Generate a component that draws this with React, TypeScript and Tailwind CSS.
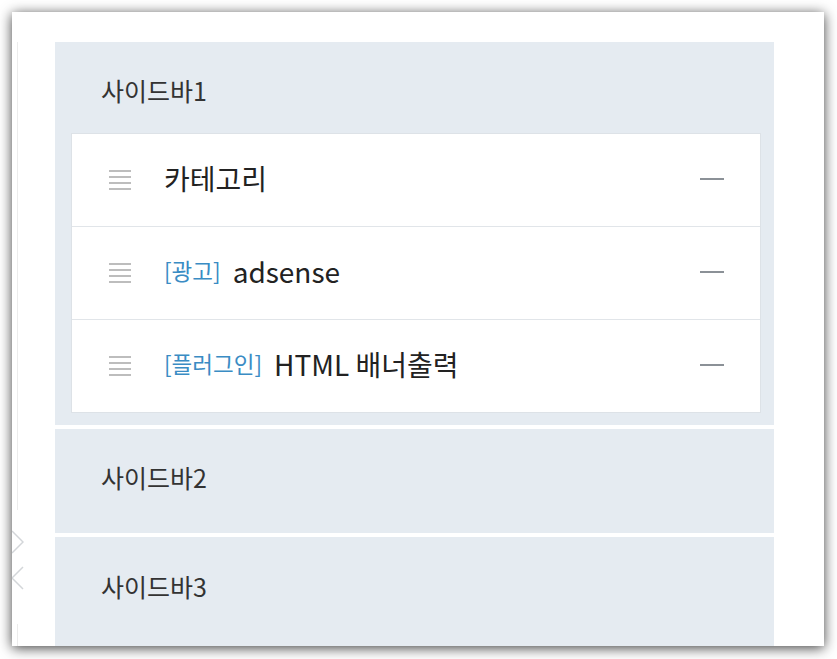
const font = { fontFamily: '"Noto Sans CJK KR", "Noto Sans", sans-serif' }

function Handle() {
  return (
    <div className="flex w-[22px] flex-col gap-[4px]">
      <span className="h-[2px] bg-[#bdbdbd]" />
      <span className="h-[2px] bg-[#bdbdbd]" />
      <span className="h-[2px] bg-[#bdbdbd]" />
      <span className="h-[2px] bg-[#bdbdbd]" />
    </div>
  )
}

function Row({ tag, title, last }: { tag?: string; title: string; last?: boolean }) {
  return (
    <div className={`flex items-center pl-[37px] pr-[36px] ${last ? "h-[92px]" : "h-[93px] border-b border-[#e1e5e9]"}`}>
      <Handle />
      <div className="ml-[33px] flex flex-1 items-center pb-[4px]">
        {tag && <span className="mr-[12px] text-[22.5px] text-[#3a8cc4]">{tag}</span>}
        <span className="text-[28px] leading-[32px] text-[#222]">{title}</span>
      </div>
      <span className="mb-[2px] h-[2px] w-[24px] bg-[#8b9197]" />
    </div>
  )
}

function Chevron({ dir }: { dir: "left" | "right" }) {
  return (
    <svg width="12" height="24" viewBox="0 0 12 24" fill="none" stroke="#d3d6d9" strokeWidth="1.5">
      {dir === "right" ? <path d="M0 1 L11 12 L0 23" /> : <path d="M11 1 L0 12 L11 23" />}
    </svg>
  )
}

export default function App() {
  return (
    <div className="h-[659px] w-[837px] bg-white p-[12px] pr-[13px]" style={font}>
      <div className="flex h-[634px] overflow-hidden bg-white pt-[30px] shadow-[0_2px_12px_rgba(0,0,0,0.75)]">
        {/* left rail */}
        <div className="flex w-[43px] flex-col">
          <div className="ml-[5px] h-[468px] w-px bg-[#ececec]" />
          <div className="mt-[20px] flex flex-col gap-[12px]">
            <Chevron dir="right" />
            <Chevron dir="left" />
          </div>
          <div className="ml-[5px] mt-[34px] w-px flex-1 bg-[#ececec]" />
        </div>

        <div className="flex w-[719px] flex-col">
          <section className="border-b-4 border-white bg-[#e5ebf1] pb-[12px]">
            <div className="h-[91px] pl-[46px] pt-[35px] text-[25px] leading-[26px] text-[#333]">사이드바1</div>
            <div className="ml-4 mr-[13px] border border-[#dde2e7] bg-white">
              <Row title="카테고리" />
              <Row tag="[광고]" title="adsense" />
              <Row tag="[플러그인]" title="HTML 배너출력" last />
            </div>
          </section>
          <section className="border-b-4 border-white bg-[#e5ebf1] pb-[43px] pl-[46px] pt-[35px] text-[25px] leading-[26px] text-[#333]">
            사이드바2
          </section>
          <section className="flex-1 bg-[#e5ebf1] pl-[46px] pt-[36px] text-[25px] leading-[26px] text-[#333]">
            사이드바3
          </section>
        </div>
      </div>
    </div>
  )
}
